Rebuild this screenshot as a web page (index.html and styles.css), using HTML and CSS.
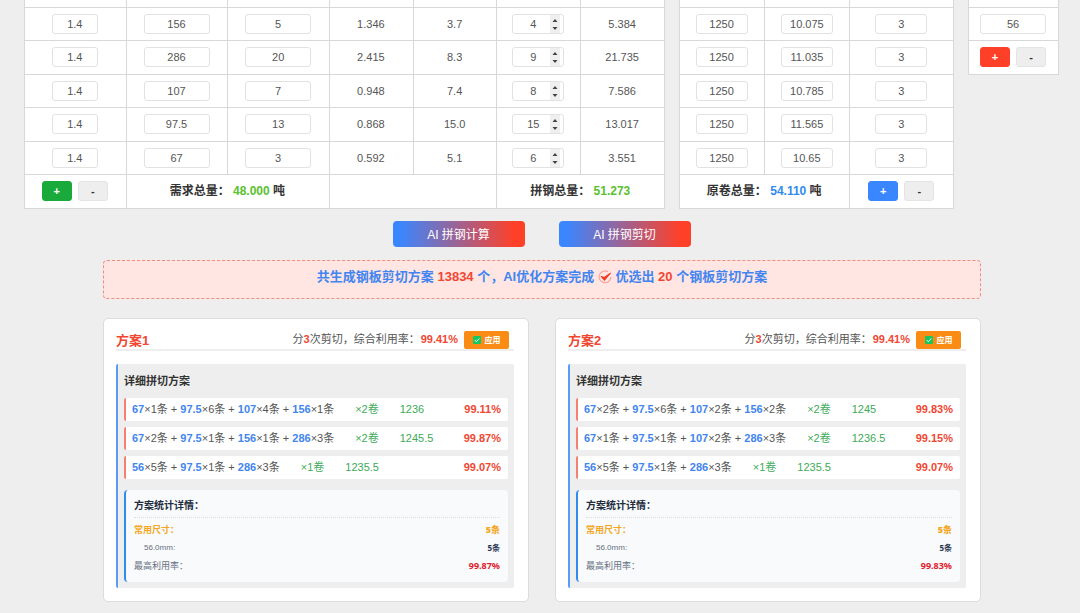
FILE: index.html
```html
<!DOCTYPE html>
<html lang="zh-CN">
<head>
    <meta charset="UTF-8">
    <meta name="viewport" content="width=device-width, initial-scale=1.0">
    <title>AI 拼钢</title>
    <link rel="stylesheet" href="styles.css">
</head>

<body>
    <main class="page">

        <div class="tables">
            <table class="list">
                <colgroup>
                    <col class="col-wide"><col class="col-wide"><col class="col-wide">
                    <col class="col"><col class="col"><col class="col"><col class="col">
                </colgroup>
                <tbody>
                    <tr class="row-cut"><td></td><td></td><td></td><td></td><td></td><td></td><td></td></tr>
                    <tr>
                        <td><input type="text" class="w-small" aria-label="厚度" value="1.4"></td>
                        <td><input type="text" class="w-large" aria-label="宽度" value="156"></td>
                        <td><input type="text" class="w-large" aria-label="需求" value="5"></td>
                        <td>1.346</td>
                        <td>3.7</td>
                        <td><input type="number" aria-label="条数" value="4"></td>
                        <td>5.384</td>
                    </tr>
                    <tr>
                        <td><input type="text" class="w-small" aria-label="厚度" value="1.4"></td>
                        <td><input type="text" class="w-large" aria-label="宽度" value="286"></td>
                        <td><input type="text" class="w-large" aria-label="需求" value="20"></td>
                        <td>2.415</td>
                        <td>8.3</td>
                        <td><input type="number" aria-label="条数" value="9"></td>
                        <td>21.735</td>
                    </tr>
                    <tr>
                        <td><input type="text" class="w-small" aria-label="厚度" value="1.4"></td>
                        <td><input type="text" class="w-large" aria-label="宽度" value="107"></td>
                        <td><input type="text" class="w-large" aria-label="需求" value="7"></td>
                        <td>0.948</td>
                        <td>7.4</td>
                        <td><input type="number" aria-label="条数" value="8"></td>
                        <td>7.586</td>
                    </tr>
                    <tr>
                        <td><input type="text" class="w-small" aria-label="厚度" value="1.4"></td>
                        <td><input type="text" class="w-large" aria-label="宽度" value="97.5"></td>
                        <td><input type="text" class="w-large" aria-label="需求" value="13"></td>
                        <td>0.868</td>
                        <td>15.0</td>
                        <td><input type="number" aria-label="条数" value="15"></td>
                        <td>13.017</td>
                    </tr>
                    <tr>
                        <td><input type="text" class="w-small" aria-label="厚度" value="1.4"></td>
                        <td><input type="text" class="w-large" aria-label="宽度" value="67"></td>
                        <td><input type="text" class="w-large" aria-label="需求" value="3"></td>
                        <td>0.592</td>
                        <td>5.1</td>
                        <td><input type="number" aria-label="条数" value="6"></td>
                        <td>3.551</td>
                    </tr>
                    <tr>
                        <td>
                            <div class="row-buttons">
                                <button type="button" class="btn btn-green">+</button>
                                <button type="button" class="btn">-</button>
                            </div>
                        </td>
                        <td colspan="2" class="total">需求总量： <span class="green">48.000</span> 吨</td>
                        <td colspan="2"></td>
                        <td colspan="2" class="total">拼钢总量： <span class="green">51.273</span></td>
                    </tr>
                </tbody>
            </table>

            <table class="list">
                <colgroup>
                    <col class="col"><col class="col"><col class="col-wide">
                </colgroup>
                <tbody>
                    <tr class="row-cut"><td></td><td></td><td></td></tr>
                    <tr>
                        <td><input type="text" aria-label="卷宽" value="1250"></td>
                        <td><input type="text" aria-label="卷重" value="10.075"></td>
                        <td><input type="text" aria-label="刀数" value="3"></td>
                    </tr>
                    <tr>
                        <td><input type="text" aria-label="卷宽" value="1250"></td>
                        <td><input type="text" aria-label="卷重" value="11.035"></td>
                        <td><input type="text" aria-label="刀数" value="3"></td>
                    </tr>
                    <tr>
                        <td><input type="text" aria-label="卷宽" value="1250"></td>
                        <td><input type="text" aria-label="卷重" value="10.785"></td>
                        <td><input type="text" aria-label="刀数" value="3"></td>
                    </tr>
                    <tr>
                        <td><input type="text" aria-label="卷宽" value="1250"></td>
                        <td><input type="text" aria-label="卷重" value="11.565"></td>
                        <td><input type="text" aria-label="刀数" value="3"></td>
                    </tr>
                    <tr>
                        <td><input type="text" aria-label="卷宽" value="1250"></td>
                        <td><input type="text" aria-label="卷重" value="10.65"></td>
                        <td><input type="text" aria-label="刀数" value="3"></td>
                    </tr>
                    <tr>
                        <td colspan="2" class="total">原卷总量： <span class="blue">54.110</span> 吨</td>
                        <td>
                            <div class="row-buttons">
                                <button type="button" class="btn btn-blue">+</button>
                                <button type="button" class="btn">-</button>
                            </div>
                        </td>
                    </tr>
                </tbody>
            </table>

            <table class="list">
                <tbody>
                    <tr class="row-cut"><td></td></tr>
                    <tr>
                        <td><input type="text" class="w-large" aria-label="常用尺寸" value="56"></td>
                    </tr>
                    <tr>
                        <td>
                            <div class="row-buttons">
                                <button type="button" class="btn btn-red">+</button>
                                <button type="button" class="btn">-</button>
                            </div>
                        </td>
                    </tr>
                </tbody>
            </table>
        </div>

        <div class="actions">
            <button type="button" class="btn-ai">AI 拼钢计算</button>
            <button type="button" class="btn-ai">AI 拼钢剪切</button>
        </div>

        <div class="result">
            共生成钢板剪切方案 <span class="red">13834</span> 个，AI优化方案完成
            <svg class="icon-done" viewBox="0 0 26 26">
                <path d="M19 3.500A11 11 0 1 0 24 13" fill="none" stroke="#f5a196" stroke-width="2"/>
                <path d="M6 12l6 7L23 6l-11 8z" fill="#f03a26" stroke="#f03a26" stroke-width="2" stroke-linejoin="round"/>
            </svg>
            优选出 <span class="red">20</span> 个钢板剪切方案
        </div>

        <div class="plans">
            <section class="plan">
                <div class="plan-head">
                    <h2>方案1</h2>
                    <div class="plan-info">分<b>3</b>次剪切，综合利用率：<b class="rate">99.41%</b></div>
                    <button type="button" class="btn-apply">
                        <svg class="icon-check" viewBox="0 0 16 16">
                            <rect width="16" height="16" rx="2" fill="#12c85f"/>
                            <path d="M3.500 8l3.200 3.500L12.500 5" fill="none" stroke="#fff" stroke-width="2"/>
                        </svg>
                        应用
                    </button>
                </div>
                <div class="detail">
                    <h3>详细拼切方案</h3>
                    <ul class="cuts">
                        <li><span><b>67</b>×1条 + <b>97.5</b>×6条 + <b>107</b>×4条 + <b>156</b>×1条</span><span class="coil">×2卷</span><span class="coil">1236</span><strong>99.11%</strong></li>
                        <li><span><b>67</b>×2条 + <b>97.5</b>×1条 + <b>156</b>×1条 + <b>286</b>×3条</span><span class="coil">×2卷</span><span class="coil">1245.5</span><strong>99.87%</strong></li>
                        <li><span><b>56</b>×5条 + <b>97.5</b>×1条 + <b>286</b>×3条</span><span class="coil">×1卷</span><span class="coil">1235.5</span><strong>99.07%</strong></li>
                    </ul>
                    <div class="stats">
                        <h4>方案统计详情：</h4>
                        <div class="stat common"><span>常用尺寸：</span><b>5条</b></div>
                        <div class="stat size"><span>56.0mm:</span><b>5条</b></div>
                        <div class="stat best"><span>最高利用率：</span><b>99.87%</b></div>
                    </div>
                </div>
            </section>

            <section class="plan">
                <div class="plan-head">
                    <h2>方案2</h2>
                    <div class="plan-info">分<b>3</b>次剪切，综合利用率：<b class="rate">99.41%</b></div>
                    <button type="button" class="btn-apply">
                        <svg class="icon-check" viewBox="0 0 16 16">
                            <rect width="16" height="16" rx="2" fill="#12c85f"/>
                            <path d="M3.500 8l3.200 3.500L12.500 5" fill="none" stroke="#fff" stroke-width="2"/>
                        </svg>
                        应用
                    </button>
                </div>
                <div class="detail">
                    <h3>详细拼切方案</h3>
                    <ul class="cuts">
                        <li><span><b>67</b>×2条 + <b>97.5</b>×6条 + <b>107</b>×2条 + <b>156</b>×2条</span><span class="coil">×2卷</span><span class="coil">1245</span><strong>99.83%</strong></li>
                        <li><span><b>67</b>×1条 + <b>97.5</b>×1条 + <b>107</b>×2条 + <b>286</b>×3条</span><span class="coil">×2卷</span><span class="coil">1236.5</span><strong>99.15%</strong></li>
                        <li><span><b>56</b>×5条 + <b>97.5</b>×1条 + <b>286</b>×3条</span><span class="coil">×1卷</span><span class="coil">1235.5</span><strong>99.07%</strong></li>
                    </ul>
                    <div class="stats">
                        <h4>方案统计详情：</h4>
                        <div class="stat common"><span>常用尺寸：</span><b>5条</b></div>
                        <div class="stat size"><span>56.0mm:</span><b>5条</b></div>
                        <div class="stat best"><span>最高利用率：</span><b>99.83%</b></div>
                    </div>
                </div>
            </section>
        </div>

    </main>
</body>
</html>
```
FILE: styles.css
```css
* {
    box-sizing: border-box;
}

body {
    margin: 0;
    background-color: #eeeeee;
    color: #555555;
    font-family: "Liberation Sans", "Noto Sans CJK SC", sans-serif;
    font-size: 11px;
    line-height: 16px;
}

h2, h3, h4, ul {
    margin: 0;
    padding: 0;
}

button, input {
    font-family: inherit;
}

.page {
    padding: 0 21px 10px 24px;
}

/* tables */
.tables {
    display: grid;
    grid-template-columns: 641fr 275fr 91fr;
    gap: 14px;
    align-items: start;
}

table.list {
    width: 100%;
    table-layout: fixed;
    border-collapse: collapse;
    background-color: white;
}

/* column widths are shares, the table stretches them */
.col {
    width: 70px;
}

.col-wide {
    width: 85px;
}

.list td {
    height: 34px;
    padding: 0 1px 0 0;
    border: 1px solid #d8d8d8;
    text-align: center;
}

.list tr:nth-child(even) td {
    height: 33px;
}

.list tr.row-cut td {
    height: 7px;
    border-top: none;
}

input[type=text], input[type=number] {
    display: block;
    width: 52px;
    height: 20px;
    margin: auto;
    padding: 0 3px;
    border: 1px solid #e2e2e2;
    border-radius: 3px;
    background-color: white;
    color: #555555;
    font-size: 11px;
    text-align: center;
}

input.w-small {
    width: 46px;
}

input.w-large {
    width: 66px;
}

input[type=number]::-webkit-inner-spin-button {
    appearance: none;
    width: 10px;
    height: 18px;
    opacity: 1;
    background: #efefef url("data:image/svg+xml,%3Csvg xmlns='http://www.w3.org/2000/svg' viewBox='0 0 10 18'%3E%3Cpath d='M2.500 7L5 4l2.500 3zM2.500 12L5 15l2.500-3z' fill='%23444'/%3E%3C/svg%3E");
}

.total {
    color: #333333;
    font-size: 12px;
    font-weight: bold;
}

.green {
    color: #5ac12f;
}

.blue {
    color: #2f8bf0;
}

.red {
    color: #f04632;
}

.row-buttons {
    display: flex;
    justify-content: center;
    gap: 6px;
}

.btn {
    width: 30px;
    height: 20px;
    padding: 0;
    border: 1px solid #e4e4e4;
    border-radius: 3px;
    background-color: #eeeeee;
    color: #333333;
    font-size: 11px;
    font-weight: bold;
    line-height: 16px;
    cursor: pointer;
}

.btn-green {
    border-color: #1aaa3c;
    background-color: #1aaa3c;
    color: white;
}

.btn-blue {
    border-color: #3a86ff;
    background-color: #3a86ff;
    color: white;
}

.btn-red {
    border-color: #ff4028;
    background-color: #ff4028;
    color: white;
}

/* AI buttons */
.actions {
    display: flex;
    justify-content: center;
    gap: 34px;
    margin: 12px 0 13px;
}

.btn-ai {
    width: 132px;
    height: 26px;
    padding: 0;
    border: none;
    border-radius: 4px;
    background: linear-gradient(90deg, #3a86ff 5%, #ff4028 92%);
    color: white;
    font-size: 12px;
    cursor: pointer;
}

.result {
    margin: 0 78px 19px 79px;
    padding: 7px 0 13px;
    border: 1px dashed #f28b80;
    border-radius: 4px;
    background-color: #ffe6e3;
    color: #4285f0;
    font-size: 13px;
    font-weight: bold;
    line-height: 17px;
    text-align: center;
}

.icon-done {
    width: 14px;
    height: 14px;
    vertical-align: -3px;
}

/* plan cards */
.plans {
    display: grid;
    grid-template-columns: 1fr 1fr;
    gap: 26px;
    margin: 0 78px 0 79px;
}

.plan {
    padding: 12px 14px 13px 12px;
    border: 1px solid #dddddd;
    border-radius: 5px;
    background-color: white;
}

.plan-head {
    display: flex;
    align-items: center;
    margin-bottom: 13px;
    padding-right: 5px;
    border-bottom: 2px solid #eeeeee;
}

.plan-head h2 {
    margin-right: auto;
    padding-top: 2px;
    color: #f04632;
    font-size: 13px;
    line-height: 16px;
}

.plan-info b {
    color: #f04632;
}

.plan-info .rate {
    margin-left: 1px;
}

.plan-info {
    padding-bottom: 2px;
}

.btn-apply {
    display: flex;
    align-items: center;
    justify-content: center;
    gap: 4px;
    width: 45px;
    height: 18px;
    margin-left: 6px;
    padding: 0;
    border: none;
    border-radius: 2px;
    background-color: #fa8c16;
    color: white;
    font-size: 8px;
    font-weight: bold;
    cursor: pointer;
}

.icon-check {
    width: 8px;
    height: 8px;
}

.detail {
    padding: 9px 6px 6px;
    border-left: 2px solid #5b9bf5;
    border-radius: 2px;
    background-color: #eeeeee;
}

.detail h3 {
    margin-bottom: 9px;
    color: #333333;
    font-size: 11px;
    line-height: 16px;
}

.cuts {
    display: grid;
    gap: 6px;
    list-style: none;
}

.cuts li {
    display: flex;
    gap: 21px;
    padding: 3px 7px 4px 6px;
    border-left: 2px solid #f57f72;
    border-radius: 2px;
    background-color: white;
}

.cuts b {
    color: #4285f0;
}

.cuts .coil {
    color: #3daa58;
}

.cuts strong {
    margin-left: auto;
    color: #f04632;
}

.stats {
    margin-top: 11px;
    padding: 8px 8px 7px;
    border-left: 2px solid #2f8bf0;
    border-radius: 4px;
    background-color: #f8fafc;
}

.stats h4 {
    margin-bottom: 3px;
    padding-bottom: 3px;
    border-bottom: 1px dotted #dddddd;
    color: #222c3c;
    font-size: 10px;
    line-height: 16px;
}

.stat {
    display: flex;
    justify-content: space-between;
    color: #667080;
    font-size: 9px;
    line-height: 18px;
}

.stat b {
    font-family: "Noto Sans", "Noto Sans CJK SC", sans-serif;
}

.common {
    color: #f5a623;
    font-weight: bold;
}

.size {
    padding-left: 10px;
    font-size: 8px;
}

.size b {
    color: #2c3852;
}

.best b {
    color: #e0202c;
}
```
